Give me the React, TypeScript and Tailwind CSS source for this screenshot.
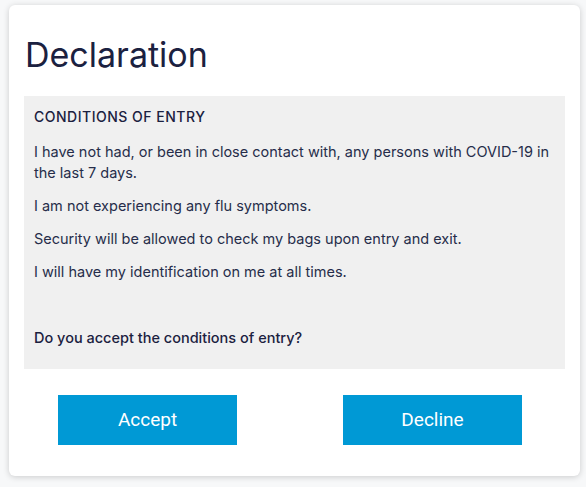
import React from 'react';

const conditions = [
  'I have not had, or been in close contact with, any persons with COVID-19 in the last 7 days.',
  'I am not experiencing any flu symptoms.',
  'Security will be allowed to check my bags upon entry and exit.',
  'I will have my identification on me at all times.',
];

export default function App() {
  return (
    <div className="min-h-[487px] w-[586px] bg-[#f7f8f9] pl-[9px] pt-[5px]" style={{ fontFamily: 'Inter, "Noto Sans", sans-serif' }}>
      <div className="w-[571px] h-[471px] bg-white rounded-md shadow-[0_1px_6px_rgba(0,0,0,0.18)] px-[15px] pt-[30px]">
        <h1 className="text-[34px] leading-[40px] text-[#1b2140] ml-[1px] mb-[21px]">Declaration</h1>

        {/* Conditions panel */}
        <div className="bg-[#f0f0f0] h-[273px] px-[10px] pt-[11px] text-[14.5px] text-[#262d4a]">
          <h2 className="font-medium text-[14px] tracking-[0.5px] leading-[20px] mb-[14px] text-[#1b2140]">CONDITIONS OF ENTRY</h2>
          {conditions.map((c) => (
            <p key={c} className="leading-[21px] mb-[12px]">{c}</p>
          ))}
          <p className="font-medium leading-[21px] mt-[45px] text-[#1b2140]">Do you accept the conditions of entry?</p>
        </div>

        <div className="flex gap-[106px] pl-[34px] pt-[26px]">
          <button className="w-[179px] h-[50px] bg-[#0099d5] text-white text-[19px]" style={{ fontFamily: 'Roboto, sans-serif' }}>
            Accept
          </button>
          <button className="w-[179px] h-[50px] bg-[#0099d5] text-white text-[19px]" style={{ fontFamily: 'Roboto, sans-serif' }}>
            Decline
          </button>
        </div>
      </div>
    </div>
  );
}
